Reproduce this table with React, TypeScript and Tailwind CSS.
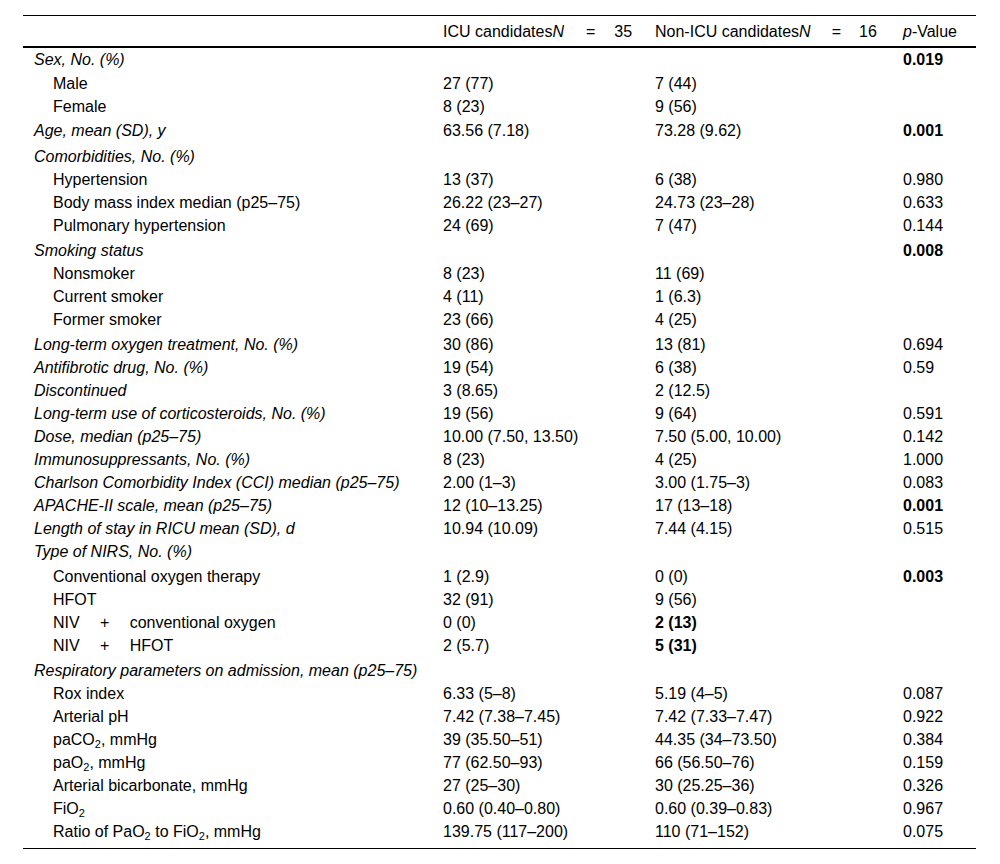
import React from "react";

type Row = {
  label: React.ReactNode;
  kind: "group" | "sub";
  a?: React.ReactNode;
  b?: React.ReactNode;
  p?: React.ReactNode;
  bBold?: boolean;
  pBold?: boolean;
  extra?: number;
};

const rows: Row[] = [
  { label: "Sex, No. (%)", kind: "group", p: "0.019", pBold: true },
  { label: "Male", kind: "sub", a: "27 (77)", b: "7 (44)", extra: 1 },
  { label: "Female", kind: "sub", a: "8 (23)", b: "9 (56)" },
  { label: "Age, mean (SD), y", kind: "group", a: "63.56 (7.18)", b: "73.28 (9.62)", p: "0.001", pBold: true, extra: 1 },
  { label: "Comorbidities, No. (%)", kind: "group", extra: 3 },
  { label: "Hypertension", kind: "sub", a: "13 (37)", b: "6 (38)", p: "0.980" },
  { label: "Body mass index median (p25\u201375)", kind: "sub", a: "26.22 (23\u201327)", b: "24.73 (23\u201328)", p: "0.633" },
  { label: "Pulmonary hypertension", kind: "sub", a: "24 (69)", b: "7 (47)", p: "0.144" },
  { label: "Smoking status", kind: "group", p: "0.008", pBold: true, extra: 2 },
  { label: "Nonsmoker", kind: "sub", a: "8 (23)", b: "11 (69)" },
  { label: "Current smoker", kind: "sub", a: "4 (11)", b: "1 (6.3)" },
  { label: "Former smoker", kind: "sub", a: "23 (66)", b: "4 (25)" },
  { label: "Long-term oxygen treatment, No. (%)", kind: "group", a: "30 (86)", b: "13 (81)", p: "0.694", extra: 2 },
  { label: "Antifibrotic drug, No. (%)", kind: "group", a: "19 (54)", b: "6 (38)", p: "0.59" },
  { label: "Discontinued", kind: "group", a: "3 (8.65)", b: "2 (12.5)" },
  { label: "Long-term use of corticosteroids, No. (%)", kind: "group", a: "19 (56)", b: "9 (64)", p: "0.591" },
  { label: "Dose, median (p25\u201375)", kind: "group", a: "10.00 (7.50, 13.50)", b: "7.50 (5.00, 10.00)", p: "0.142" },
  { label: "Immunosuppressants, No. (%)", kind: "group", a: "8 (23)", b: "4 (25)", p: "1.000" },
  { label: "Charlson Comorbidity Index (CCI) median (p25\u201375)", kind: "group", a: "2.00 (1\u20133)", b: "3.00 (1.75\u20133)", p: "0.083" },
  { label: "APACHE-II scale, mean (p25\u201375)", kind: "group", a: "12 (10\u201313.25)", b: "17 (13\u201318)", p: "0.001", pBold: true },
  { label: "Length of stay in RICU mean (SD), d", kind: "group", a: "10.94 (10.09)", b: "7.44 (4.15)", p: "0.515" },
  { label: "Type of NIRS, No. (%)", kind: "group" },
  { label: "Conventional oxygen therapy", kind: "sub", a: "1 (2.9)", b: "0 (0)", p: "0.003", pBold: true, extra: 2 },
  { label: "HFOT", kind: "sub", a: "32 (91)", b: "9 (56)" },
  {
    label: (
      <>
        NIV<span className="inline-block w-[50px] text-center">+</span>conventional oxygen
      </>
    ),
    kind: "sub",
    a: "0 (0)",
    b: "2 (13)",
    bBold: true,
  },
  {
    label: (
      <>
        NIV<span className="inline-block w-[50px] text-center">+</span>HFOT
      </>
    ),
    kind: "sub",
    a: "2 (5.7)",
    b: "5 (31)",
    bBold: true,
  },
  { label: "Respiratory parameters on admission, mean (p25\u201375)", kind: "group", extra: 2 },
  { label: "Rox index", kind: "sub", a: "6.33 (5\u20138)", b: "5.19 (4\u20135)", p: "0.087" },
  { label: "Arterial pH", kind: "sub", a: "7.42 (7.38\u20137.45)", b: "7.42 (7.33\u20137.47)", p: "0.922" },
  {
    label: (
      <>
        paCO<sub className="text-[11px]">2</sub>, mmHg
      </>
    ),
    kind: "sub",
    a: "39 (35.50\u201351)",
    b: "44.35 (34\u201373.50)",
    p: "0.384",
  },
  {
    label: (
      <>
        paO<sub className="text-[11px]">2</sub>, mmHg
      </>
    ),
    kind: "sub",
    a: "77 (62.50\u201393)",
    b: "66 (56.50\u201376)",
    p: "0.159",
  },
  { label: "Arterial bicarbonate, mmHg", kind: "sub", a: "27 (25\u201330)", b: "30 (25.25\u201336)", p: "0.326" },
  {
    label: (
      <>
        FiO<sub className="text-[11px]">2</sub>
      </>
    ),
    kind: "sub",
    a: "0.60 (0.40\u20130.80)",
    b: "0.60 (0.39\u20130.83)",
    p: "0.967",
  },
  {
    label: (
      <>
        Ratio of PaO<sub className="text-[11px]">2</sub> to FiO<sub className="text-[11px]">2</sub>, mmHg
      </>
    ),
    kind: "sub",
    a: "139.75 (117\u2013200)",
    b: "110 (71\u2013152)",
    p: "0.075",
  },
];

const padTop: Record<number, string> = {
  0: "pt-0",
  1: "pt-[1px]",
  2: "pt-[2px]",
  3: "pt-[3px]",
};

export default function App() {
  return (
    <div
      className="min-h-[864px] w-[1000px] bg-white text-black"
      style={{ fontFamily: '"Liberation Sans", Arial, sans-serif' }}
    >
      <div className="pl-[23px] pr-[24px] pt-[15px]">
        <div className="border-t border-black">
          <div className="grid h-[32px] grid-cols-[409px_212px_248px_1fr] items-center border-b-2 border-black text-[16px] leading-[23px]">
            <div className="pl-[11px]" />
            <div className="pl-[11px] whitespace-nowrap">
              ICU candidates<i>N</i>
              <span className="ml-[22px] mr-[19px] inline-block">=</span>35
            </div>
            <div className="pl-[11px] whitespace-nowrap">
              Non-ICU candidates<i>N</i>
              <span className="ml-[21px] mr-[18px] inline-block">=</span>16
            </div>
            <div className="pl-[11px] whitespace-nowrap">
              <i>p</i>-Value
            </div>
          </div>
          <div className="border-b border-black pb-[5px]">
            {rows.map((r, i) => (
              <div
                key={i}
                className={`grid grid-cols-[409px_212px_248px_1fr] text-[16px] leading-[23px] ${padTop[r.extra ?? 0]}`}
              >
                <div
                  className={`whitespace-nowrap ${r.kind === "group" ? "pl-[11px] italic" : "pl-[30px]"}`}
                >
                  {r.label}
                </div>
                <div className="pl-[11px] whitespace-nowrap">{r.a}</div>
                <div className={`pl-[11px] whitespace-nowrap ${r.bBold ? "font-bold" : ""}`}>{r.b}</div>
                <div className={`pl-[11px] whitespace-nowrap ${r.pBold ? "font-bold" : ""}`}>{r.p}</div>
              </div>
            ))}
          </div>
        </div>
      </div>
    </div>
  );
}
